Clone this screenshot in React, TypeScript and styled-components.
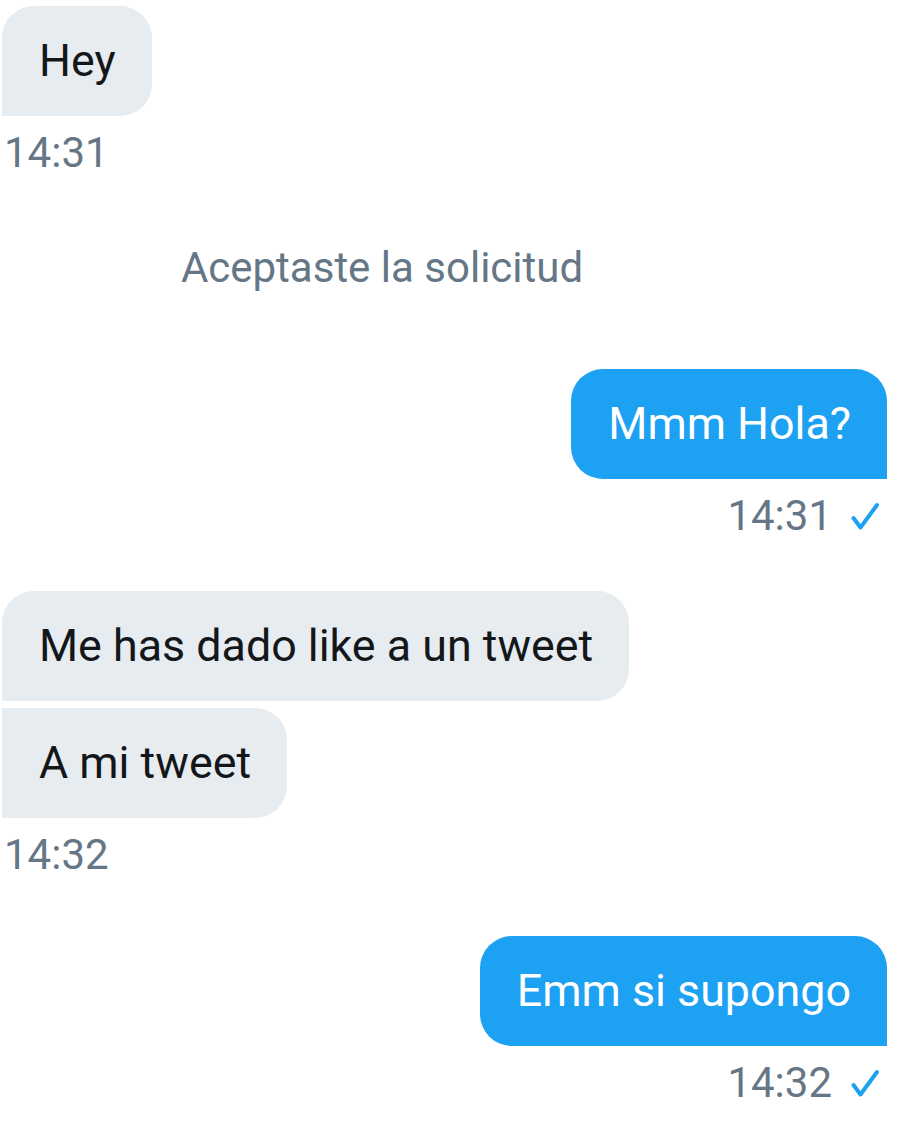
import React from 'react'
import styled, { createGlobalStyle, css } from 'styled-components'

const GlobalStyle = createGlobalStyle`
  html, body {
    margin: 0;
    padding: 0;
    background: #ffffff;
  }
  body {
    font-family: Roboto, "Noto Sans", "Liberation Sans", sans-serif;
    -webkit-font-smoothing: antialiased;
  }
`

const Thread = styled.div`
  display: flex;
  flex-direction: column;
  padding: 6px 25px 20px 2px;
`

const Group = styled.div<{ $mine?: boolean; $top?: number }>`
  display: flex;
  flex-direction: column;
  align-items: ${(p) => (p.$mine ? 'flex-end' : 'flex-start')};
  gap: 7px;
  margin-top: ${(p) => p.$top ?? 0}px;
`

// first bubble of a received run keeps its top-left corner, the rest get squared off
const Bubble = styled.div<{ $mine?: boolean; $first?: boolean }>`
  font-size: 44.8px;
  line-height: 56px;
  padding: 27px 36px 27px 37px;
  white-space: nowrap;
  border-radius: 32px;
  ${(p) =>
    p.$mine
      ? css`
          background: #1da1f2;
          color: #ffffff;
          border-bottom-right-radius: 0;
        `
      : css`
          background: #e6ecf0;
          color: #14171a;
          border-bottom-left-radius: 0;
          ${!p.$first && 'border-top-left-radius: 0;'}
        `}
`

const Meta = styled.div<{ $mine?: boolean }>`
  display: flex;
  align-items: center;
  gap: 16px;
  margin-top: 6px;
  padding: ${(p) => (p.$mine ? '0 7px 0 0' : '0 0 0 2px')};
  font-size: 42px;
  line-height: 48px;
  color: #657786;
`

const Notice = styled.div`
  margin-top: 67px;
  padding-right: 125px;
  text-align: center;
  font-size: 42px;
  line-height: 48px;
  color: #657786;
`

const Check = () => (
  <svg width="32" height="30" viewBox="0 0 32 30" fill="none">
    <path
      d="M5.5 17 L12.5 26.5 L29 4"
      stroke="#1da1f2"
      strokeWidth="4"
      strokeLinecap="round"
      strokeLinejoin="round"
    />
  </svg>
)

type Msg = { text: string }

type Block =
  | { kind: 'group'; mine: boolean; top: number; time: string; messages: Msg[] }
  | { kind: 'notice'; text: string }

const thread: Block[] = [
  { kind: 'group', mine: false, top: 0, time: '14:31', messages: [{ text: 'Hey' }] },
  { kind: 'notice', text: 'Aceptaste la solicitud' },
  { kind: 'group', mine: true, top: 77, time: '14:31', messages: [{ text: 'Mmm Hola?' }] },
  {
    kind: 'group',
    mine: false,
    top: 51,
    time: '14:32',
    messages: [{ text: 'Me has dado like a un tweet' }, { text: 'A mi tweet' }],
  },
  { kind: 'group', mine: true, top: 57, time: '14:32', messages: [{ text: 'Emm si supongo' }] },
]

export default function App() {
  return (
    <>
      <GlobalStyle />
      <Thread>
        {thread.map((b, i) =>
          b.kind === 'notice' ? (
            <Notice key={i}>{b.text}</Notice>
          ) : (
            <Group key={i} $mine={b.mine} $top={b.top}>
              {b.messages.map((m, j) => (
                <Bubble key={j} $mine={b.mine} $first={j === 0}>
                  {m.text}
                </Bubble>
              ))}
              <Meta $mine={b.mine}>
                <span>{b.time}</span>
                {b.mine && <Check />}
              </Meta>
            </Group>
          )
        )}
      </Thread>
    </>
  )
}
